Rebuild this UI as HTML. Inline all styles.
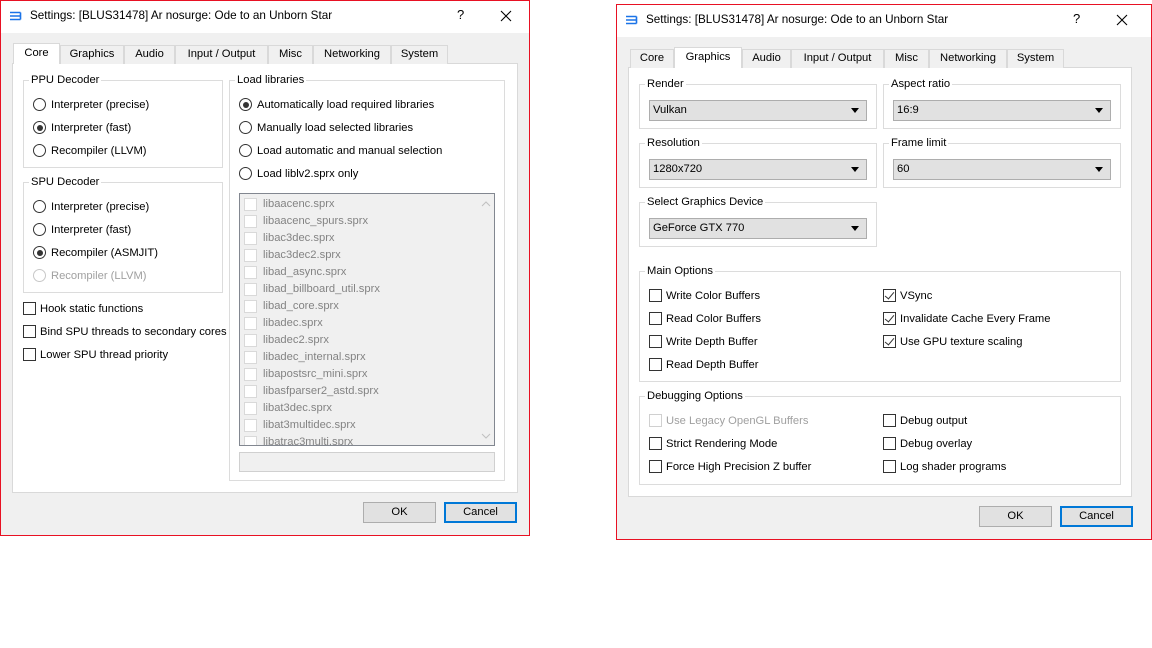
<!DOCTYPE html>
<html><head><meta charset="utf-8">
<style>
*{box-sizing:border-box;margin:0;padding:0}
body{width:1152px;height:648px;background:#fff;position:relative;overflow:hidden;font-family:"Liberation Sans",sans-serif;font-size:11px;color:#000}
.a{position:absolute}
.t{position:absolute;white-space:nowrap;font-size:11.2px;line-height:14px}
.win{position:absolute;background:#f0f0f0;border:1px solid #e81123}
.tb{position:absolute;left:0;right:0;top:0;height:32px;background:#fff}
.pane{position:absolute;background:#fff;border:1px solid #d9d9d9}
.tab{position:absolute;background:#f0f0f0;border:1px solid #d9d9d9;border-bottom:none;height:19px;text-align:center;line-height:17px;font-size:11.2px}
.tab.sel{background:#fff;height:21px;z-index:2;line-height:19px}
.grp{position:absolute;border:1px solid #dcdcdc}
.gt{position:absolute;background:#fff;padding:0 2px;font-size:11.2px;line-height:14px;white-space:nowrap}
.rd{position:absolute;width:13px;height:13px;border:1px solid #333;border-radius:50%;background:#fff}
.rd.on::after{content:"";position:absolute;left:2.5px;top:2.5px;width:6px;height:6px;border-radius:50%;background:#333}
.rd.dis{border-color:#c8c8c8}
.cb{position:absolute;width:13px;height:13px;border:1px solid #333;background:#fff}
.cb.dis{border-color:#d0d0d0}
.cb.on::after{content:"";position:absolute;left:3px;top:0px;width:4px;height:8px;border:solid #333;border-width:0 1px 1px 0;transform:rotate(40deg)}
.gray{color:#838383}
.combo{position:absolute;height:21px;background:#e1e1e1;border:1px solid #adadad;font-size:11.2px;line-height:19px;padding-left:3px}
.combo::after{content:"";position:absolute;right:7px;top:7px;border-left:4px solid transparent;border-right:4px solid transparent;border-top:5px solid #000}
.btn{position:absolute;height:21px;background:#e1e1e1;border:1px solid #adadad;text-align:center;line-height:19px;font-size:11.2px}
.btn.def{border:2px solid #0078d7;line-height:17px}
.lc{border-color:#d9d9d9}
</style></head><body>

<!-- LEFT WINDOW -->
<div class="win" style="left:0;top:0;width:530px;height:536px">
 <div class="tb"></div>
</div>
<svg class="a" style="left:9px;top:11px" width="14" height="11"><path d="M1 1.5H11.5M1 5H11.5M1 8.5H11.5M11.5 1.5V8.5" stroke="#1a73e8" stroke-width="1.6" fill="none"/></svg>
<div class="t" style="left:30px;top:9px;font-size:11.7px">Settings: [BLUS31478] Ar nosurge: Ode to an Unborn Star</div>
<div class="t" style="left:457px;top:8px;font-size:13px">?</div>
<svg class="a" style="left:500px;top:10px" width="12" height="12"><path d="M1 1L11 11M11 1L1 11" stroke="#000" stroke-width="1.1"/></svg>

<div class="pane" style="left:12px;top:63px;width:506px;height:430px"></div>
<div class="tab sel" style="left:13px;top:43px;width:47px">Core</div>
<div class="tab" style="left:60px;top:45px;width:64px">Graphics</div>
<div class="tab" style="left:124px;top:45px;width:51px">Audio</div>
<div class="tab" style="left:175px;top:45px;width:93px">Input / Output</div>
<div class="tab" style="left:268px;top:45px;width:45px">Misc</div>
<div class="tab" style="left:313px;top:45px;width:78px">Networking</div>
<div class="tab" style="left:391px;top:45px;width:57px">System</div>

<div class="grp" style="left:23px;top:80px;width:200px;height:88px"></div>
<div class="gt" style="left:29px;top:73px">PPU Decoder</div>
<div class="rd" style="left:33px;top:98px"></div><div class="t" style="left:51px;top:98px">Interpreter (precise)</div>
<div class="rd on" style="left:33px;top:121px"></div><div class="t" style="left:51px;top:121px">Interpreter (fast)</div>
<div class="rd" style="left:33px;top:144px"></div><div class="t" style="left:51px;top:144px">Recompiler (LLVM)</div>

<div class="grp" style="left:23px;top:182px;width:200px;height:111px"></div>
<div class="gt" style="left:29px;top:175px">SPU Decoder</div>
<div class="rd" style="left:33px;top:200px"></div><div class="t" style="left:51px;top:200px">Interpreter (precise)</div>
<div class="rd" style="left:33px;top:223px"></div><div class="t" style="left:51px;top:223px">Interpreter (fast)</div>
<div class="rd on" style="left:33px;top:246px"></div><div class="t" style="left:51px;top:246px">Recompiler (ASMJIT)</div>
<div class="rd dis" style="left:33px;top:269px"></div><div class="t" style="left:51px;top:269px;color:#a0a0a0">Recompiler (LLVM)</div>

<div class="cb" style="left:23px;top:302px"></div><div class="t" style="left:40px;top:302px">Hook static functions</div>
<div class="cb" style="left:23px;top:325px"></div><div class="t" style="left:40px;top:325px">Bind SPU threads to secondary cores</div>
<div class="cb" style="left:23px;top:348px"></div><div class="t" style="left:40px;top:348px">Lower SPU thread priority</div>

<div class="grp" style="left:229px;top:80px;width:276px;height:401px"></div>
<div class="gt" style="left:235px;top:73px">Load libraries</div>
<div class="rd on" style="left:239px;top:98px"></div><div class="t" style="left:257px;top:98px">Automatically load required libraries</div>
<div class="rd" style="left:239px;top:121px"></div><div class="t" style="left:257px;top:121px">Manually load selected libraries</div>
<div class="rd" style="left:239px;top:144px"></div><div class="t" style="left:257px;top:144px">Load automatic and manual selection</div>
<div class="rd" style="left:239px;top:167px"></div><div class="t" style="left:257px;top:167px">Load liblv2.sprx only</div>

<div class="a" style="left:239px;top:193px;width:256px;height:253px;border:1px solid #828790;background:#f0f0f0"></div>
<div class="a" style="left:240px;top:194px;width:239px;height:251px;overflow:hidden">
 <div class="cb lc" style="left:4px;top:4px"></div><div class="t gray" style="left:23px;top:3px">libaacenc.sprx</div>
 <div class="cb lc" style="left:4px;top:21px"></div><div class="t gray" style="left:23px;top:20px">libaacenc_spurs.sprx</div>
 <div class="cb lc" style="left:4px;top:38px"></div><div class="t gray" style="left:23px;top:37px">libac3dec.sprx</div>
 <div class="cb lc" style="left:4px;top:55px"></div><div class="t gray" style="left:23px;top:54px">libac3dec2.sprx</div>
 <div class="cb lc" style="left:4px;top:72px"></div><div class="t gray" style="left:23px;top:71px">libad_async.sprx</div>
 <div class="cb lc" style="left:4px;top:89px"></div><div class="t gray" style="left:23px;top:88px">libad_billboard_util.sprx</div>
 <div class="cb lc" style="left:4px;top:106px"></div><div class="t gray" style="left:23px;top:105px">libad_core.sprx</div>
 <div class="cb lc" style="left:4px;top:123px"></div><div class="t gray" style="left:23px;top:122px">libadec.sprx</div>
 <div class="cb lc" style="left:4px;top:140px"></div><div class="t gray" style="left:23px;top:139px">libadec2.sprx</div>
 <div class="cb lc" style="left:4px;top:157px"></div><div class="t gray" style="left:23px;top:156px">libadec_internal.sprx</div>
 <div class="cb lc" style="left:4px;top:174px"></div><div class="t gray" style="left:23px;top:173px">libapostsrc_mini.sprx</div>
 <div class="cb lc" style="left:4px;top:191px"></div><div class="t gray" style="left:23px;top:190px">libasfparser2_astd.sprx</div>
 <div class="cb lc" style="left:4px;top:208px"></div><div class="t gray" style="left:23px;top:207px">libat3dec.sprx</div>
 <div class="cb lc" style="left:4px;top:225px"></div><div class="t gray" style="left:23px;top:224px">libat3multidec.sprx</div>
 <div class="cb lc" style="left:4px;top:242px"></div><div class="t gray" style="left:23px;top:241px">libatrac3multi.sprx</div>
</div>
<svg class="a" style="left:481px;top:200px" width="10" height="8"><path d="M1 6L5 2L9 6" stroke="#c0c0c0" fill="none"/></svg>
<svg class="a" style="left:481px;top:432px" width="10" height="8"><path d="M1 2L5 6L9 2" stroke="#c0c0c0" fill="none"/></svg>
<div class="a" style="left:239px;top:452px;width:256px;height:20px;border:1px solid #d0d0d0;background:#f0f0f0"></div>

<div class="btn" style="left:363px;top:502px;width:73px">OK</div>
<div class="btn def" style="left:444px;top:502px;width:73px">Cancel</div>

<!-- RIGHT WINDOW -->
<div class="win" style="left:616px;top:4px;width:536px;height:536px">
 <div class="tb"></div>
</div>
<svg class="a" style="left:625px;top:15px" width="14" height="11"><path d="M1 1.5H11.5M1 5H11.5M1 8.5H11.5M11.5 1.5V8.5" stroke="#1a73e8" stroke-width="1.6" fill="none"/></svg>
<div class="t" style="left:646px;top:13px;font-size:11.7px">Settings: [BLUS31478] Ar nosurge: Ode to an Unborn Star</div>
<div class="t" style="left:1073px;top:12px;font-size:13px">?</div>
<svg class="a" style="left:1116px;top:14px" width="12" height="12"><path d="M1 1L11 11M11 1L1 11" stroke="#000" stroke-width="1.1"/></svg>

<div class="pane" style="left:628px;top:67px;width:504px;height:430px"></div>
<div class="tab" style="left:630px;top:49px;width:44px">Core</div>
<div class="tab sel" style="left:674px;top:47px;width:68px">Graphics</div>
<div class="tab" style="left:742px;top:49px;width:49px">Audio</div>
<div class="tab" style="left:791px;top:49px;width:93px">Input / Output</div>
<div class="tab" style="left:884px;top:49px;width:45px">Misc</div>
<div class="tab" style="left:929px;top:49px;width:78px">Networking</div>
<div class="tab" style="left:1007px;top:49px;width:57px">System</div>

<div class="grp" style="left:639px;top:84px;width:238px;height:45px"></div>
<div class="gt" style="left:645px;top:77px">Render</div>
<div class="combo" style="left:649px;top:100px;width:218px">Vulkan</div>
<div class="grp" style="left:883px;top:84px;width:238px;height:45px"></div>
<div class="gt" style="left:889px;top:77px">Aspect ratio</div>
<div class="combo" style="left:893px;top:100px;width:218px">16:9</div>

<div class="grp" style="left:639px;top:143px;width:238px;height:45px"></div>
<div class="gt" style="left:645px;top:136px">Resolution</div>
<div class="combo" style="left:649px;top:159px;width:218px">1280x720</div>
<div class="grp" style="left:883px;top:143px;width:238px;height:45px"></div>
<div class="gt" style="left:889px;top:136px">Frame limit</div>
<div class="combo" style="left:893px;top:159px;width:218px">60</div>

<div class="grp" style="left:639px;top:202px;width:238px;height:45px"></div>
<div class="gt" style="left:645px;top:195px">Select Graphics Device</div>
<div class="combo" style="left:649px;top:218px;width:218px">GeForce GTX 770</div>

<div class="grp" style="left:639px;top:271px;width:482px;height:111px"></div>
<div class="gt" style="left:645px;top:264px">Main Options</div>
<div class="cb" style="left:649px;top:289px"></div><div class="t" style="left:666px;top:289px">Write Color Buffers</div>
<div class="cb" style="left:649px;top:312px"></div><div class="t" style="left:666px;top:312px">Read Color Buffers</div>
<div class="cb" style="left:649px;top:335px"></div><div class="t" style="left:666px;top:335px">Write Depth Buffer</div>
<div class="cb" style="left:649px;top:358px"></div><div class="t" style="left:666px;top:358px">Read Depth Buffer</div>
<div class="cb on" style="left:883px;top:289px"></div><div class="t" style="left:900px;top:289px">VSync</div>
<div class="cb on" style="left:883px;top:312px"></div><div class="t" style="left:900px;top:312px">Invalidate Cache Every Frame</div>
<div class="cb on" style="left:883px;top:335px"></div><div class="t" style="left:900px;top:335px">Use GPU texture scaling</div>

<div class="grp" style="left:639px;top:396px;width:482px;height:89px"></div>
<div class="gt" style="left:645px;top:389px">Debugging Options</div>
<div class="cb dis" style="left:649px;top:414px"></div><div class="t" style="left:666px;top:414px;color:#a0a0a0">Use Legacy OpenGL Buffers</div>
<div class="cb" style="left:649px;top:437px"></div><div class="t" style="left:666px;top:437px">Strict Rendering Mode</div>
<div class="cb" style="left:649px;top:460px"></div><div class="t" style="left:666px;top:460px">Force High Precision Z buffer</div>
<div class="cb" style="left:883px;top:414px"></div><div class="t" style="left:900px;top:414px">Debug output</div>
<div class="cb" style="left:883px;top:437px"></div><div class="t" style="left:900px;top:437px">Debug overlay</div>
<div class="cb" style="left:883px;top:460px"></div><div class="t" style="left:900px;top:460px">Log shader programs</div>

<div class="btn" style="left:979px;top:506px;width:73px">OK</div>
<div class="btn def" style="left:1060px;top:506px;width:73px">Cancel</div>
</body></html>
